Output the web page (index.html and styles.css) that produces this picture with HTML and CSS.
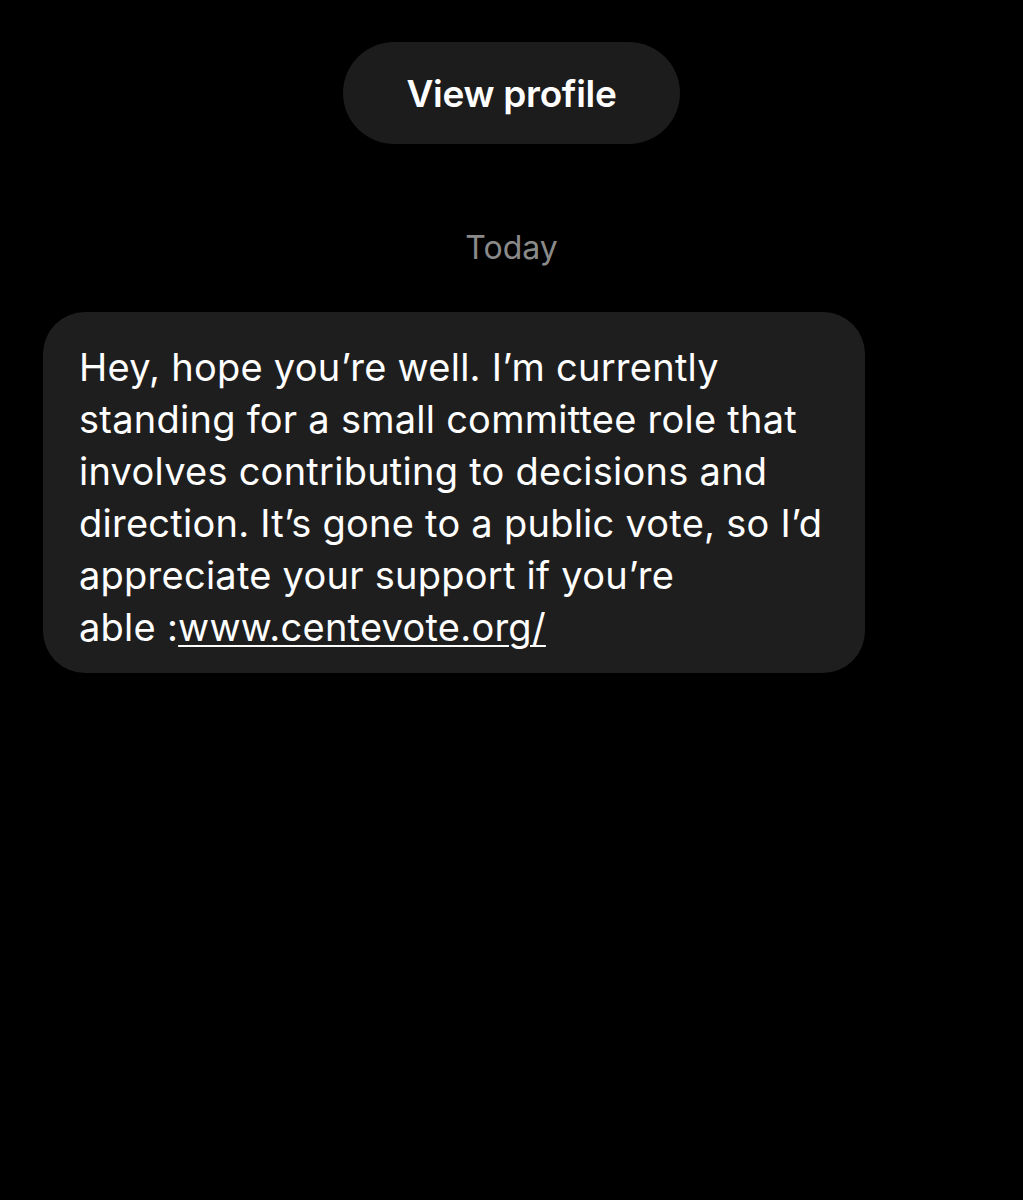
FILE: index.html
```html
<!DOCTYPE html>
<html>
<head>
  <title>Messages</title>
  <link rel="stylesheet" href="styles.css">
</head>
<body>
  <div class="profile-top">
    <button class="view-profile">View profile</button>
  </div>

  <div class="day-label">Today</div>

  <div class="thread">
    <div class="bubble">
      Hey, hope you’re well. I’m currently standing for a small committee role that involves contributing to decisions and direction. It’s gone to a public vote, so I’d appreciate your support if you’re able&nbsp;:<a href="#" class="msg-link">www.centevote.org/</a>
    </div>
  </div>
</body>
</html>
```

FILE: styles.css
```css
body {
  margin: 0;
  background-color: #000;
  color: #fff;
  font-family: Inter, "Noto Sans", sans-serif;
}
.profile-top {
  display: flex;
  justify-content: center;
  padding-top: 42px;
}
.view-profile {
  width: 337px;
  height: 102px;
  border: none;
  border-radius: 51px;
  background-color: #1c1c1c;
  color: #fff;
  font-family: Inter, "Noto Sans", sans-serif;
  font-size: 37px;
  font-weight: 600;
  letter-spacing: -0.3px;
}
.day-label {
  text-align: center;
  margin-top: 86px;
  color: #8a8a8a;
  font-size: 32px;
  line-height: 36px;
}
.thread {
  padding: 46px 0 0 43px;
}
.bubble {
  width: 752px;
  padding: 29px 34px 20px 36px;
  background-color: #1e1e1e;
  border-radius: 42px;
  font-size: 38px;
  line-height: 52px;
  letter-spacing: 0.25px;
}
.msg-link {
  color: #fff;
  text-decoration: underline;
  text-decoration-thickness: 2px;
  text-underline-offset: 4px;
}
```
